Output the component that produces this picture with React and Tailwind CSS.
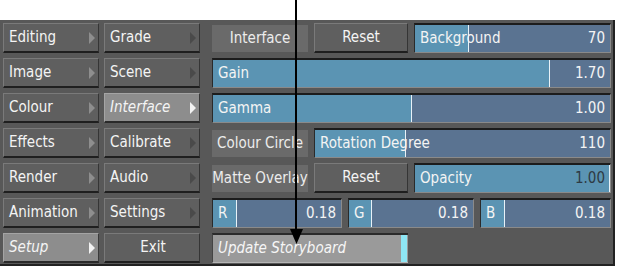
import React from 'react';

const leftMenu = [
    ['Editing', 'Grade'],
    ['Image', 'Scene'],
    ['Colour', 'Interface'],
    ['Effects', 'Calibrate'],
    ['Render', 'Audio'],
    ['Animation', 'Settings'],
    ['Setup', 'Exit']
];

const Arrow = ({ color }) => (
    <svg width="6" height="12" viewBox="0 0 6 12" className="shrink-0">
        <path d="M0 0 L6 6 L0 12 Z" fill={color} />
    </svg>
);

const MenuButton = ({ label, active, arrow = true, center = false, arrowColor }) => (
    <div
        className={
            'h-[30px] w-[96px] flex items-center justify-between pl-[5px] pr-[3px] border-t border-l border-r border-b-2 ' +
            (active
                ? 'bg-[#8d8d8d] border-t-[#a4a4a4] border-l-[#a4a4a4] border-r-[#3a3a3a] border-b-[#2a2a2a]'
                : 'bg-[#5f5f5f] border-t-[#7a7a7a] border-l-[#7a7a7a] border-r-[#353535] border-b-[#1f1f1f]')
        }
    >
        <span className={'text-[15px] whitespace-nowrap text-[#f4f4f4] ' + (active ? 'italic ' : '') + (center ? 'w-full text-center' : '')}>
            {label}
        </span>
        {arrow && <Arrow color={active ? '#f2f2f2' : arrowColor} />}
    </div>
);

const FlatLabel = ({ label, w = 'w-[96px]' }) => (
    <div className={'h-[27px] mt-[2px] flex items-center justify-center whitespace-nowrap bg-[#6a6a6a] text-[15px] text-[#ececec] ' + w}>
        {label}
    </div>
);

const Slider = ({ label, value, fill, w, valueDark }) => (
    <div className={'relative h-[30px] flex items-center justify-between px-[5px] bg-[#5a7391] border-t-2 border-t-[#1c1c1c] border-l border-l-[#2a2a2a] border-b border-b-[#8a8a8a] border-r border-r-[#8a8a8a] ' + w}>
        <div className="absolute left-0 top-0 bottom-0 bg-[#5b94b3] border-r border-r-[#e8f2f8]" style={{ width: fill }} />
        <span className="relative whitespace-nowrap text-[15px] text-[#f4f4f4]">{label}</span>
        <span className={'relative text-[15px] ' + (valueDark ? 'text-[#2e3a44]' : 'text-[#f4f4f4]')}>{value}</span>
    </div>
);

const SmallButton = ({ label }) => (
    <div className="h-[30px] w-[94px] flex items-center justify-center bg-[#5f5f5f] border-t border-l border-t-[#7a7a7a] border-l-[#7a7a7a] border-r border-r-[#353535] border-b-2 border-b-[#1f1f1f] text-[15px] text-[#f4f4f4]">
        {label}
    </div>
);

export default function App() {
    return (
        <div className="relative w-[617px] h-[269px] bg-white" style={{ fontFamily: '"DejaVu Sans Condensed", "Liberation Sans", sans-serif' }}>
            <div className="h-[20px]" />
            <div className="w-[615px] h-[246px] bg-[#585858] border-r-2 border-b-2 border-[#222] flex pt-[3px] pl-[3px]">
                <div className="flex flex-col gap-[5px]">
                    {leftMenu.map(([a, b]) => (
                        <div key={a} className="flex gap-[5px]">
                            <MenuButton label={a} active={a === 'Setup'} arrowColor="#8e8e8e" />
                            <MenuButton label={b} active={b === 'Interface'} arrow={b !== 'Exit'} center={b === 'Exit'} arrowColor="#4a4a4a" />
                        </div>
                    ))}
                </div>
                <div className="ml-[12px] flex flex-col gap-[5px] w-[399px]">
                    <div className="flex gap-[6px] h-[30px]">
                        <FlatLabel label="Interface" />
                        <SmallButton label="Reset" />
                        <Slider label="Background" value="70" fill={54} w="w-[197px]" />
                    </div>
                    <Slider label="Gain" value="1.70" fill={337} w="w-[399px]" />
                    <Slider label="Gamma" value="1.00" fill={199} w="w-[399px]" />
                    <div className="flex gap-[6px] h-[30px]">
                        <FlatLabel label="Colour Circle" />
                        <Slider label="Rotation Degree" value="110" fill={91} w="w-[297px]" />
                    </div>
                    <div className="flex gap-[6px] h-[30px]">
                        <FlatLabel label="Matte Overlay" />
                        <SmallButton label="Reset" />
                        <Slider label="Opacity" value="1.00" fill={195} w="w-[197px]" valueDark />
                    </div>
                    <div className="flex gap-[6px] h-[30px]">
                        <Slider label="R" value="0.18" fill={24} w="w-[130px]" />
                        <Slider label="G" value="0.18" fill={23} w="w-[126px]" />
                        <Slider label="B" value="0.18" fill={24} w="w-[131px]" />
                    </div>
                    <div className="h-[30px] w-[196px] flex items-center justify-between bg-[#9a9a9a] border-t-2 border-t-[#2a2a2a] border-l border-l-[#444] border-b border-b-[#b5b5b5]">
                        <span className="pl-[5px] text-[15px] italic whitespace-nowrap text-[#f6f6f6]">Update Storyboard</span>
                        <div className="h-full w-[6px] mr-[1px] bg-[#8ee6f4]" />
                    </div>
                </div>
            </div>
            <div className="absolute left-[295px] top-0 w-[2px] h-[232px] bg-black" />
            <svg className="absolute left-[290px] top-[229px]" width="13" height="15" viewBox="0 0 13 15">
                <path d="M0 0 L13 0 L6.5 15 Z" fill="#000" />
            </svg>
        </div>
    );
}
